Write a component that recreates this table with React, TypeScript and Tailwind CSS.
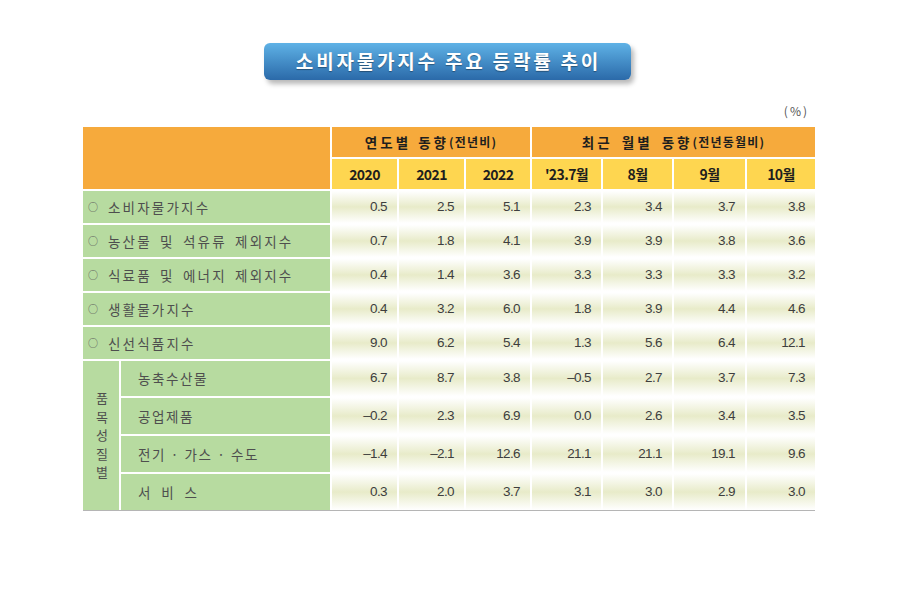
import React from "react";

const KR = "font-['Noto_Sans_CJK_KR','Liberation_Sans',sans-serif]";
const NUM = "font-['Liberation_Sans',Arial,sans-serif]";

type Row = { label: string; values: string[] };

const mainRows: Row[] = [
  { label: "소비자물가지수", values: ["0.5", "2.5", "5.1", "2.3", "3.4", "3.7", "3.8"] },
  { label: "농산물 및 석유류 제외지수", values: ["0.7", "1.8", "4.1", "3.9", "3.9", "3.8", "3.6"] },
  { label: "식료품 및 에너지 제외지수", values: ["0.4", "1.4", "3.6", "3.3", "3.3", "3.3", "3.2"] },
  { label: "생활물가지수", values: ["0.4", "3.2", "6.0", "1.8", "3.9", "4.4", "4.6"] },
  { label: "신선식품지수", values: ["9.0", "6.2", "5.4", "1.3", "5.6", "6.4", "12.1"] },
];

const subRows: Row[] = [
  { label: "농축수산물", values: ["6.7", "8.7", "3.8", "–0.5", "2.7", "3.7", "7.3"] },
  { label: "공업제품", values: ["–0.2", "2.3", "6.9", "0.0", "2.6", "3.4", "3.5"] },
  { label: "전기 · 가스 · 수도", values: ["–1.4", "–2.1", "12.6", "21.1", "21.1", "19.1", "9.6"] },
  { label: "서\u00a0\u00a0비\u00a0\u00a0스", values: ["0.3", "2.0", "3.7", "3.1", "3.0", "2.9", "3.0"] },
];

function Num({ v }: { v: string }) {
  return (
    <div
      className={`flex items-center justify-end pr-[10px] bg-gradient-to-b from-white via-[#e8ebc9] to-white text-[13.5px] tracking-[-0.6px] text-[#3e3e3e] ${NUM}`}
    >
      {v}
    </div>
  );
}

export default function App() {
  return (
    <div className="w-[900px] h-[594px] bg-white pt-[43px]">
      <div className="flex justify-center">
        <div className="ml-[-6px] w-[367px] h-[37px] rounded-[6px] bg-gradient-to-b from-[#5fb2e6] to-[#2b6aa9] shadow-[3px_4px_5px_rgba(0,0,0,0.28)] flex items-center justify-center">
          <span
            className={`${KR} text-white text-[19px] font-semibold tracking-[2.8px] pl-[3px] [text-shadow:0_1px_1px_rgba(0,0,0,0.35)]`}
          >
            소비자물가지수 주요 등락률 추이
          </span>
        </div>
      </div>

      <div className="ml-[83px] w-[732px]">
        <div className={`mt-[23px] h-[16px] text-right pr-[6px] text-[12px] leading-[16px] tracking-[2px] text-[#555] ${KR}`}>
          (%)
        </div>
        <div className="mt-[8px] grid gap-[2px] grid-cols-[36px_209px_65px_65px_64px_69px_69px_71px_68px] grid-rows-[30px_30px_32px_32px_32px_32px_32px_35px_36px_36px_36px] border-b border-[#b5b5b5]">
          <div className="col-span-2 row-span-2 bg-[#f6aa3c]" />
          <div
            className={`col-span-3 bg-[#f6aa3c] flex items-center justify-center font-bold text-[#1e1e1e] ${KR}`}
          >
            <span className="text-[13.5px] tracking-[3px] [word-spacing:1px]">연도별 동향</span>
            <span className="text-[12px] tracking-[1.2px]">(전년비)</span>
          </div>
          <div
            className={`col-span-4 bg-[#f6aa3c] flex items-center justify-center font-bold text-[#1e1e1e] ${KR}`}
          >
            <span className="text-[13.5px] tracking-[3px] [word-spacing:3px]">최근 월별 동향</span>
            <span className="text-[12px] tracking-[1.2px]">(전년동월비)</span>
          </div>
          {["2020", "2021", "2022", "'23.7월", "8월", "9월", "10월"].map((h) => (
            <div
              key={h}
              className={`bg-[#fed650] flex items-center justify-center font-bold text-[14px] tracking-[-0.6px] text-[#1e1e1e] ${KR}`}
            >
              {h}
            </div>
          ))}

          {mainRows.map((r) => (
            <React.Fragment key={r.label}>
              <div
                className={`col-span-2 bg-[#b7dba0] flex items-center pl-[5px] text-[13.5px] tracking-[2.2px] [word-spacing:3px] text-[#4e4e4e] ${KR}`}
              >
                <span className="w-[20px] text-[10px] text-[#5a5a5a] leading-none">○</span>
                <span>{r.label}</span>
              </div>
              {r.values.map((v, i) => (
                <Num key={i} v={v} />
              ))}
            </React.Fragment>
          ))}

          <div
            className={`row-span-4 bg-[#b7dba0] flex flex-col items-center justify-center pl-[2px] text-[13px] text-[#4e4e4e] ${KR}`}
          >
            {["품", "목", "성", "질", "별"].map((c) => (
              <span key={c} className="block leading-[18.5px]">
                {c}
              </span>
            ))}
          </div>
          {subRows.map((r) => (
            <React.Fragment key={r.label}>
              <div
                className={`bg-[#b7dba0] flex items-center pl-[17px] text-[13.5px] tracking-[1.6px] text-[#4e4e4e] ${KR}`}
              >
                {r.label}
              </div>
              {r.values.map((v, i) => (
                <Num key={i} v={v} />
              ))}
            </React.Fragment>
          ))}
        </div>
      </div>
    </div>
  );
}
